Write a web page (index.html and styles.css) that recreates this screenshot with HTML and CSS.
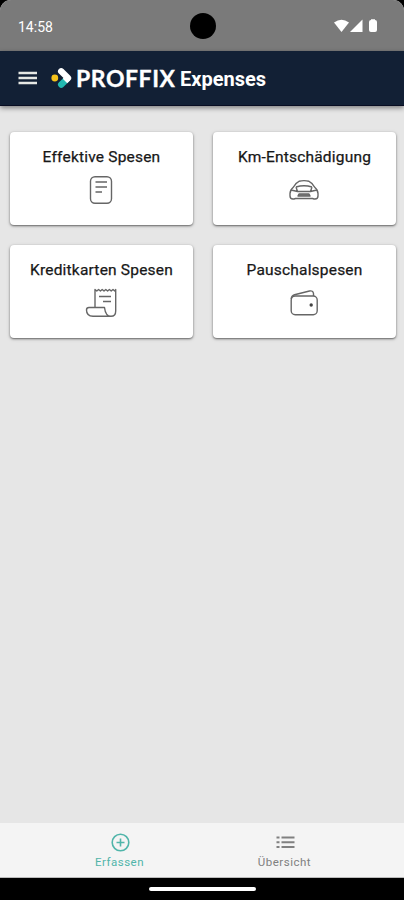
FILE: index.html
```html
<!DOCTYPE html>
<html lang="de">
<head>
<meta charset="utf-8">
<title>PROFFIX Expenses</title>
<link rel="stylesheet" href="styles.css">
</head>
<body>
<div class="screen">
  <div class="status">
    <span class="time">14:58</span>
    <span class="camera"></span>
    <svg class="signals" width="44" height="14" viewBox="0 0 44 14" fill="#fff">
      <path d="M0 3.5Q7.5-2.2 15 3.5L7.5 13Z"/><path d="M28.5.5V13H16Z"/><path d="M37 1V.3h4V1q2 0 2 2v8q0 2-2 2h-4q-2 0-2-2V3q0-2 2-2Z"/>
    </svg>
  </div>
  <header class="appbar">
    <svg class="menu" width="20" height="14" viewBox="0 0 20 14" stroke="#e6e8e4" stroke-width="2.6"><path d="M.5 2h18.5M.5 7h18.5M.5 12h18.5"/></svg>
    <svg class="mark" width="22" height="22" viewBox="0 0 22 22" fill="none" stroke-width="6.4" stroke-linejoin="round">
      <circle cx="3.8" cy="11" r="3.4" fill="#f5c21b"/>
      <path d="M10.2 17.600L16 12" stroke="#22b8b0" stroke-linecap="round"/>
      <path d="M10.2 4.300L17 11" stroke="#fff" stroke-linecap="round"/>
      <path d="M14 14L17 11" stroke="#fff"/>
    </svg>
    <span class="brand">PROFFIX</span>
    <span class="product">Expenses</span>
  </header>
  <main class="cards">
    <section class="card">
      <h2>Effektive Spesen</h2>
      <svg width="32" height="32" viewBox="0 0 32 32"><rect x="5.500" y="2.700" width="21" height="26.600" rx="4.500"/><path d="M10.500 8H22M10.500 13H22M10.500 18H17"/></svg>
    </section>
    <section class="card">
      <h2>Km-Entschädigung</h2>
      <svg width="32" height="32" viewBox="0 0 32 32"><path d="M5.500 13Q8 8.500 11 7.300Q16 6 21 7.300Q24 8.500 26.500 13Q30 16 30 19.500V22Q30 25 27 25H26L24.500 24.500H7.500L6 25H5Q2 25 2 22V19.500Q2 16 5.500 13ZM8 13Q16 10.500 24 13M8 13L9.500 17.500H22.500L24 13M3 16L9.500 17.500M29 16L22.500 17.500"/><path d="M11 20H21L22 22H10Z" fill="#888"/></svg>
    </section>
    <section class="card">
      <h2>Kreditkarten Spesen</h2>
      <svg width="32" height="32" viewBox="0 0 32 32"><path d="M10 20.500V2.500l1.800 1.500 1.800-1.500 1.800 1.500 1.800-1.500 1.800 1.500 1.800-1.500 1.800 1.500 1.800-1.500 1.800 1.500 1.800-1.500 1.800 1.500L30.700 2.500V24Q30.700 29.300 26 29.300H8Q1.500 29 1.500 23Q1.500 20.500 4 20.500H19.500Q20.500 29.300 26 29.300M14 9.500H26M18 14.500H26"/></svg>
    </section>
    <section class="card">
      <h2>Pauschalspesen</h2>
      <svg width="32" height="32" viewBox="0 0 32 32"><rect x="3.200" y="9" width="26" height="18.700" rx="4"/><path d="M3.200 12Q3.500 8.500 6.500 7.700L21.500 4Q25 3.300 25.500 6.500V9"/><circle class="clasp" cx="23.200" cy="18" r="1.700"/></svg>
    </section>
  </main>
  <nav class="tabs">
    <a class="tab active"><svg width="20" height="20" viewBox="0 0 20 20" fill="none" stroke="currentColor" stroke-width="1.600"><circle cx="10.500" cy="9.500" r="8.300"/><path d="M10.500 5.500v8M6.500 9.500h8"/></svg><span>Erfassen</span></a>
    <a class="tab"><svg width="20" height="20" viewBox="0 0 20 20" fill="none" stroke="currentColor" stroke-width="1.900"><path d="M1.500 4.500h3M6.500 4.500h13M1.500 9.300h3M6.500 9.300h13M1.500 14h3M6.500 14h13"/></svg><span>Übersicht</span></a>
  </nav>
  <div class="gesture"><span></span></div>
</div>
</body>
</html>
```
FILE: styles.css
```css
* { box-sizing: border-box; }
body { margin: 0; background: #000; font-family: Roboto, sans-serif; }
.screen { width: 404px; height: 900px; display: flex; flex-direction: column; background: #e6e6e6; border-radius: 11px 11px 0 0; overflow: hidden; }
.status { height: 51px; flex: none; background: #7a7a7a; display: grid; grid-template-columns: 172px 26px 1fr; align-items: center; padding: 1px 26px 0 18px; color: #fff; }
.time { font-size: 14px; padding-top: 2px; }
.camera { width: 26px; height: 26px; border-radius: 50%; background: #000; }
.signals { justify-self: end; }
.appbar { height: 55px; flex: none; background: #122035; border-bottom: 1px solid #080d22; display: flex; align-items: center; padding-left: 18px; color: #fff; box-shadow: 0 2px 5px rgba(0,0,0,.45); white-space: nowrap; }
.mark { margin-left: 13px; flex: none; }
.menu { flex: none; }
.brand { font: 700 23px/28px Lato, sans-serif; letter-spacing: .55px; -webkit-text-stroke: .3px #fff; width: 104px; margin-left: 3px; }
.product { font-weight: 700; font-size: 20px; line-height: 28px; padding-top: 2px; }
.cards { flex: 1; display: grid; grid-template-columns: 183px 183px; grid-template-rows: 93px 93px; gap: 20px 20px; padding: 26px 0 0 10px; }
.card { background: #fff; border-radius: 4px; box-shadow: 0 1px 2px rgba(0,0,0,.5), 0 1px 4px rgba(0,0,0,.15); display: flex; flex-direction: column; align-items: center; padding-top: 14px; }
.card h2 { margin: 0; font-weight: 400; font-size: 15.5px; line-height: 22px; letter-spacing: .2px; -webkit-text-stroke: .25px #181818; color: #181818; white-space: nowrap; }
.card svg { margin: 6px 1px 0 0; fill: none; stroke: #666; stroke-width: 1.4; stroke-linejoin: round; }
.card .clasp { fill: #444; stroke: none; }
.tabs { height: 55px; flex: none; background: #f4f4f4; display: flex; justify-content: center; border-bottom: 1px solid #bbb; }
.tab { width: 165px; display: flex; flex-direction: column; align-items: center; padding-top: 10px; color: #808080; font-size: 11.5px; line-height: 14px; letter-spacing: .5px; }
.tab span { margin-top: 2px; }
.tab.active { color: #50b5aa; }
.gesture { height: 22px; flex: none; background: #000; display: flex; justify-content: center; align-items: center; }
.gesture span { width: 107px; height: 4px; border-radius: 2px; background: #fff; }
```
